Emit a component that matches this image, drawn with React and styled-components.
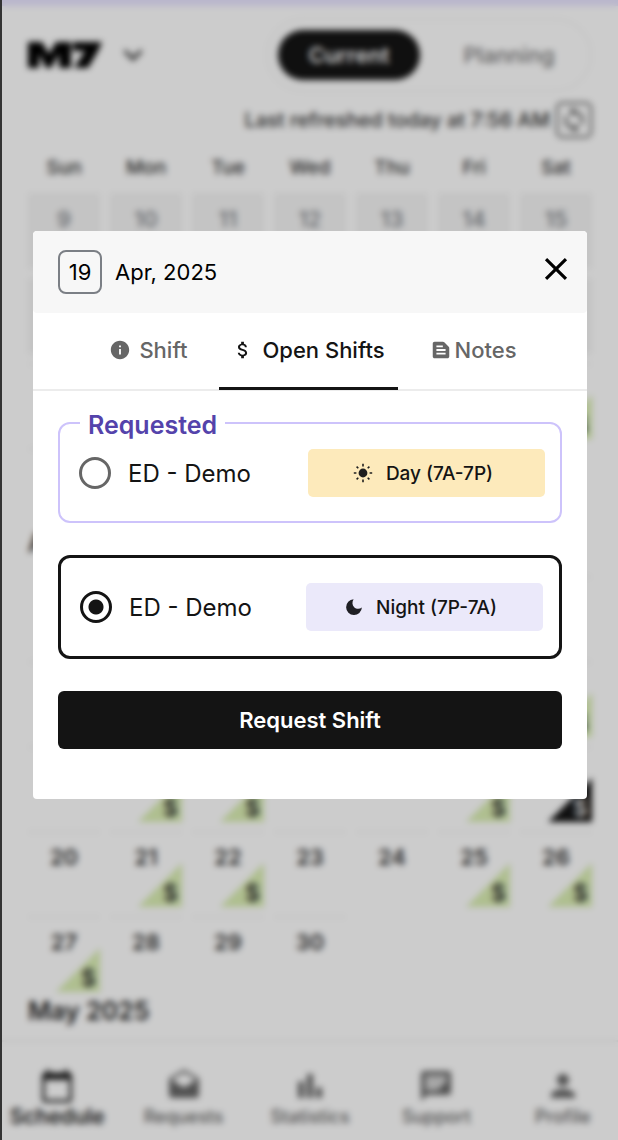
import React, { useState } from "react";
import styled, { createGlobalStyle } from "styled-components";
import {
  MdAttachMoney,
  MdBarChart,
  MdCalendarToday,
  MdClose,
  MdDrafts,
  MdInfo,
  MdKeyboardArrowDown,
  MdPerson,
  MdSync,
  MdTextSnippet
} from "react-icons/md";

const GlobalStyle = createGlobalStyle`
  * {
    box-sizing: border-box;
  }
  body {
    margin: 0;
    background: #fff;
    color: #141414;
    font-family: Inter, "Liberation Sans", sans-serif;
  }
  button {
    font-family: inherit;
    color: inherit;
    background: none;
    border: 0;
    padding: 0;
    cursor: pointer;
  }
`;

const Frame = styled.div`
  position: relative;
  display: flex;
  flex-direction: column;
  min-height: 100vh;
  overflow: hidden;
  border-left: 2px solid #333;
`;

const Banner = styled.div`
  height: 6px;
  background: #e8e4ff;
`;

const TopBar = styled.header`
  display: flex;
  align-items: center;
  justify-content: space-between;
  padding: 12px 26px 0;
`;

const Brand = styled.button`
  display: flex;
  align-items: center;
  gap: 12px;
`;

const ModeSwitch = styled.div`
  display: flex;
  padding: 10px;
  border: 2px solid #f7f7f7;
  border-radius: 40px;
`;

const ModeButton = styled.button`
  width: ${props => (props.$active ? 142 : 160)}px;
  height: 50px;
  padding-left: ${props => (props.$active ? 0 : 18)}px;
  border-radius: 26px;
  font-size: 22px;
  font-weight: ${props => (props.$active ? 600 : 500)};
  background: ${props => (props.$active ? "#141414" : "transparent")};
  color: ${props => (props.$active ? "#fff" : "#777")};
`;

const Refreshed = styled.div`
  display: flex;
  align-items: center;
  justify-content: flex-end;
  gap: 6px;
  padding: 10px 26px 0;
  font-size: 20px;
  font-weight: 500;
  color: #333;
`;

const RefreshButton = styled.button`
  display: flex;
  align-items: center;
  justify-content: center;
  width: 36px;
  height: 36px;
  border: 2px solid #555;
  border-radius: 6px;
`;

const Week = styled.div`
  display: grid;
  grid-template-columns: repeat(7, 1fr);
  gap: 10px;
  padding: 0 26px;
`;

const Weekday = styled.div`
  padding: 18px 0 13px;
  font-size: 19px;
  line-height: 24px;
  font-weight: 500;
  text-align: center;
  color: #333;
`;

const DayCell = styled.div`
  position: relative;
  height: 76px;
  margin-bottom: 9px;
  padding-top: 12px;
  border-top: 2px solid ${props => (props.$empty ? "transparent" : "#f5f5f5")};
  font-size: 22px;
  line-height: 24px;
  font-weight: ${props => (props.$past ? 500 : 600)};
  text-align: center;
  color: ${props => (props.$past ? "#7b7f85" : "#333")};
  background: ${props => (props.$past ? "#f5f5f5" : "transparent")};
`;

const OpenFlag = styled.span`
  position: absolute;
  right: 0;
  bottom: 0;
  width: 44px;
  height: 44px;
  padding: 16px 4px 0 0;
  clip-path: polygon(100% 0, 100% 100%, 0 100%);
  text-align: right;
  font-size: 23px;
  line-height: 28px;
  background: ${props => (props.$selected ? "#141414" : "#dbefb4")};
  color: ${props => (props.$selected ? "#ddd" : "#333")};
`;

const MonthTitle = styled.h2`
  margin: 0 0 ${props => (props.$last ? 19 : 23)}px;
  padding: 0 26px;
  font-size: 25px;
  line-height: 20px;
  font-weight: 600;
  color: #222;
`;

const BottomNav = styled.nav`
  display: grid;
  grid-template-columns: repeat(5, 1fr);
  margin: auto -8px 0;
  padding: 26px 0 11px;
  border-top: 2px solid #f2f2f2;
`;

const NavLink = styled.a`
  display: flex;
  flex-direction: column;
  align-items: center;
  gap: 1px;
  font-size: ${props => (props.$active ? 21 : 18)}px;
  line-height: 24px;
  font-weight: ${props => (props.$active ? 600 : 500)};
  text-decoration: none;
  color: ${props => (props.$active ? "#222" : "#666")};
`;

const Overlay = styled.div`
  position: absolute;
  inset: 0;
  display: flex;
  align-items: center;
  justify-content: center;
  padding: 0 31px 110px;
  background: rgba(0, 0, 0, 0.2);
  backdrop-filter: blur(3px);
`;

const Dialog = styled.section`
  width: 100%;
  border-radius: 4px;
  overflow: hidden;
  background: #fff;
`;

const DialogHeader = styled.header`
  display: flex;
  align-items: center;
  height: 82px;
  padding: 0 12px 0 25px;
  border-radius: 4px;
  background: #f7f7f7;
  color: #000;
  font-size: 22px;
`;

const DateBox = styled.span`
  display: flex;
  align-items: center;
  justify-content: center;
  width: 44px;
  height: 44px;
  margin-right: 13px;
  border: 2px solid #7b7f85;
  border-radius: 8px;
`;

const CloseButton = styled.button`
  display: flex;
  margin-left: auto;
  margin-bottom: 6px;
`;

const Tabs = styled.div`
  display: flex;
  justify-content: center;
  padding-left: 6px;
  border-bottom: 2px solid #ececec;
`;

const Tab = styled.button`
  display: flex;
  align-items: center;
  gap: ${props => props.$gap}px;
  height: 77px;
  margin-bottom: -1px;
  padding: 0 ${props => (props.$active ? 13 : 32)}px;
  border-bottom: 3px solid ${props => (props.$active ? "#141414" : "transparent")};
  font-size: 22px;
  font-weight: 500;
  color: ${props => (props.$active ? "#141414" : "#666")};
`;

const DialogBody = styled.form`
  display: flex;
  flex-direction: column;
  padding: 16px 25px 50px;
`;

const RequestedGroup = styled.fieldset`
  min-width: 0;
  margin: 0;
  padding: 10px 15px 24px 19px;
  border: 2px solid #cdc3fb;
  border-radius: 12px;
`;

const RequestedLegend = styled.legend`
  margin-left: 1px;
  padding: 4px 8px 0;
  font-size: 25px;
  line-height: 28px;
  font-weight: 600;
  color: #5443ab;
`;

const SelectedGroup = styled.div`
  margin: 32px 0;
  padding: 25px 16px 25px 19px;
  border: 3px solid #141414;
  border-radius: 12px;
`;

const ShiftLabel = styled.label`
  display: flex;
  align-items: center;
  font-size: 24px;
  cursor: pointer;
`;

const Radio = styled.input`
  appearance: none;
  width: 32px;
  height: 32px;
  margin: 0 17px 0 0;
  border: 3px solid #666;
  border-radius: 50%;
  &:checked {
    border-color: #141414;
    background: radial-gradient(circle, #141414 7px, transparent 8px);
  }
`;

const ShiftTag = styled.span`
  display: flex;
  align-items: center;
  justify-content: center;
  gap: 13px;
  width: 237px;
  height: 48px;
  margin-left: auto;
  padding-right: 7px;
  border-radius: 5px;
  font-size: 19px;
  font-weight: 500;
  background: ${props => (props.$night ? "#ebe9fa" : "#fdeabb")};
`;

const SubmitButton = styled.button`
  height: 58px;
  border-radius: 6px;
  background: #141414;
  color: #fff;
  font-size: 22px;
  font-weight: 600;
`;

const Logo = () => (
  <svg width="74" height="28" viewBox="0 0 74 28" role="img" aria-label="M7">
    <path
      d="M0 1H14L21 13L28 1H43V27H31V13L23 27H18L11 13V27H0ZM45 1H74L70 10L60 27H46L57 10H45Z"
      fill="#000"
    />
  </svg>
);

const SunIcon = () => (
  <svg width="20" height="20" viewBox="0 0 20 20" aria-hidden="true">
    <circle cx="10" cy="10" r="4.4" fill="#1f1f1f" />
    <path
      d="M10 .8v2.6M10 16.6v2.6M.8 10h2.6M16.6 10h2.6M3.6 3.6l1.7 1.7M14.7 14.7l1.7 1.7M3.6 16.4l1.7-1.7M14.7 5.3l1.7-1.7"
      stroke="#1f1f1f"
      strokeWidth="1.6"
    />
  </svg>
);

const MoonIcon = () => (
  <svg width="18" height="18" viewBox="0 0 18 18" aria-hidden="true">
    <path
      d="M8.6 1.2A7.9 7.9 0 1 0 16.9 9.6C14.5 11.3 11.2 11.2 9.2 9.2C7.1 7.1 6.9 3.7 8.6 1.2Z"
      fill="#1f1f24"
    />
  </svg>
);

const ChatIcon = ({ size }) => (
  <svg width={size} height={size} viewBox="0 0 24 24" fill="currentColor">
    <path
      fillRule="evenodd"
      d="M4 2h16a2 2 0 0 1 2 2v12a2 2 0 0 1-2 2H6l-4 4V4c0-1.100.9-2 2-2zM5 5v10h8l6-6V5z"
    />
    <path d="M5 5h14v4l-6 6H5z" opacity=".3" />
  </svg>
);

const WEEKDAYS = ["Sun", "Mon", "Tue", "Wed", "Thu", "Fri", "Sat"];

const MARCH = [
  [9, 10, 11, 12, 13, 14, 15],
  [16, 17, 18, 19, 20, 21, 22],
  [23, 24, 25, 26, 27, 28, 29],
  [30, 31, null, null, null, null, null]
];

const APRIL = [
  [null, null, 1, 2, 3, 4, 5],
  [6, 7, 8, 9, 10, 11, 12],
  [13, 14, 15, 16, 17, 18, 19],
  [20, 21, 22, 23, 24, 25, 26],
  [27, 28, 29, 30, null, null, null]
];

const NAV_ITEMS = [
  { name: "Schedule", Icon: MdCalendarToday },
  { name: "Requests", Icon: MdDrafts },
  { name: "Statistics", Icon: MdBarChart },
  { name: "Support", Icon: ChatIcon },
  { name: "Profile", Icon: MdPerson }
];

const CalendarWeek = ({ days, isPast, openDays }) => (
  <Week>
    {days.map((day, i) => (
      <DayCell key={i} $past={isPast} $empty={!day}>
        {day}
        {openDays.includes(day) && (
          <OpenFlag $selected={day === 19}>$</OpenFlag>
        )}
      </DayCell>
    ))}
  </Week>
);

const App = () => {
  const [shift, setShift] = useState("night");
  const [tab, setTab] = useState("open");

  return (
    <>
      <GlobalStyle />
      <Frame>
        <Banner />
        <TopBar>
          <Brand>
            <Logo />
            <MdKeyboardArrowDown size={38} color="#333" />
          </Brand>
          <ModeSwitch>
            <ModeButton $active>Current</ModeButton>
            <ModeButton>Planning</ModeButton>
          </ModeSwitch>
        </TopBar>
        <Refreshed>
          Last refreshed today at 7:56 AM
          <RefreshButton aria-label="Refresh">
            <MdSync size={28} color="#444" />
          </RefreshButton>
        </Refreshed>
        <Week>
          {WEEKDAYS.map(name => (
            <Weekday key={name}>{name}</Weekday>
          ))}
        </Week>
        {MARCH.map((days, i) => (
          <CalendarWeek key={i} days={days} isPast={i < 2} openDays={[29]} />
        ))}
        <MonthTitle>April 2025</MonthTitle>
        {APRIL.map((days, i) => (
          <CalendarWeek
            key={i}
            days={days}
            openDays={[12, 14, 15, 18, 19, 21, 22, 25, 26, 27]}
          />
        ))}
        <MonthTitle $last>May 2025</MonthTitle>
        <BottomNav>
          {NAV_ITEMS.map(({ name, Icon }, i) => (
            <NavLink key={name} href={"#" + name} $active={i === 0}>
              <Icon size={36} />
              {name}
            </NavLink>
          ))}
        </BottomNav>
        <Overlay>
          <Dialog role="dialog" aria-label="Apr 19, 2025">
            <DialogHeader>
              <DateBox>19</DateBox>
              Apr, 2025
              <CloseButton aria-label="Close">
                <MdClose size={38} />
              </CloseButton>
            </DialogHeader>
            <Tabs role="tablist">
              <Tab
                role="tab"
                $gap={8}
                $active={tab === "shift"}
                onClick={() => setTab("shift")}
              >
                <MdInfo size={22} />
                Shift
              </Tab>
              <Tab
                role="tab"
                $gap={8}
                $active={tab === "open"}
                onClick={() => setTab("open")}
              >
                <MdAttachMoney size={22} />
                Open Shifts
              </Tab>
              <Tab
                role="tab"
                $gap={3}
                $active={tab === "notes"}
                onClick={() => setTab("notes")}
              >
                <MdTextSnippet size={22} />
                Notes
              </Tab>
            </Tabs>
            <DialogBody onSubmit={e => e.preventDefault()}>
              <RequestedGroup>
                <RequestedLegend>Requested</RequestedLegend>
                <ShiftLabel>
                  <Radio
                    type="radio"
                    name="shift"
                    checked={shift === "day"}
                    onChange={() => setShift("day")}
                  />
                  ED - Demo
                  <ShiftTag>
                    <SunIcon />
                    Day (7A-7P)
                  </ShiftTag>
                </ShiftLabel>
              </RequestedGroup>
              <SelectedGroup>
                <ShiftLabel>
                  <Radio
                    type="radio"
                    name="shift"
                    checked={shift === "night"}
                    onChange={() => setShift("night")}
                  />
                  ED - Demo
                  <ShiftTag $night>
                    <MoonIcon />
                    Night (7P-7A)
                  </ShiftTag>
                </ShiftLabel>
              </SelectedGroup>
              <SubmitButton type="submit">Request Shift</SubmitButton>
            </DialogBody>
          </Dialog>
        </Overlay>
      </Frame>
    </>
  );
};

export default App;
